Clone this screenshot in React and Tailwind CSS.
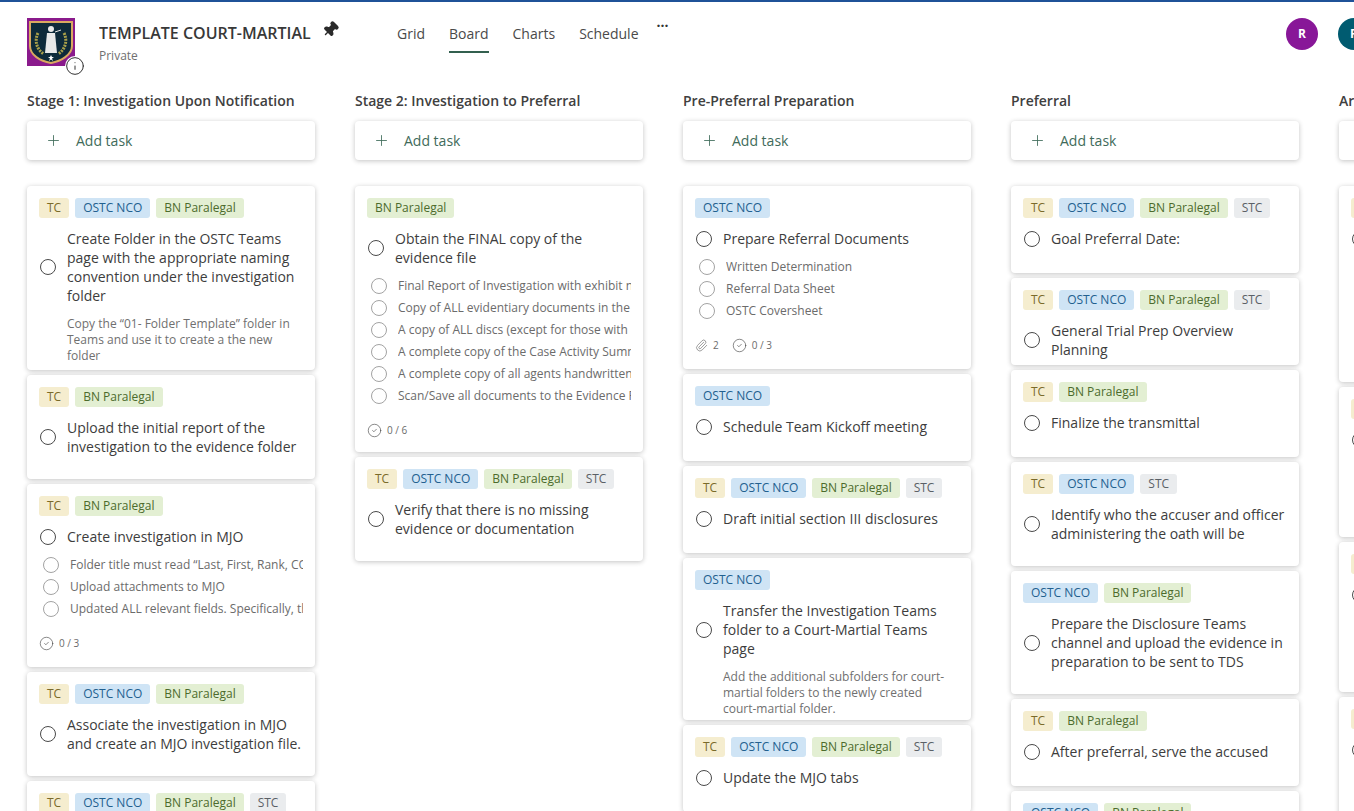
import { Plus, Pin, Info, Paperclip, CircleCheck } from "lucide-react";

const tagStyles = {
  TC: "bg-[#f5edcf] text-[#7a6a2a]",
  "OSTC NCO": "bg-[#cfe4f5] text-[#22608f]",
  "BN Paralegal": "bg-[#e3efd3] text-[#4c6b2c]",
  STC: "bg-[#eaecee] text-[#5a6066]",
};

const columns = [
  {
    title: "Stage 1: Investigation Upon Notification",
    cards: [
      {
        h: "h-[184px]",
        tags: ["TC", "OSTC NCO", "BN Paralegal"],
        title: "Create Folder in the OSTC Teams page with the appropriate naming convention under the investigation folder",
        note: "Copy the “01- Folder Template” folder in Teams and use it to create a the new folder",
      },
      {
        h: "h-[104px]",
        tags: ["TC", "BN Paralegal"],
        title: "Upload the initial report of the investigation to the evidence folder",
      },
      {
        h: "h-[183px]",
        tags: ["TC", "BN Paralegal"],
        title: "Create investigation in MJO",
        items: [
          "Folder title must read “Last, First, Rank, CO, Battalion, Investigation”",
          "Upload attachments to MJO",
          "Updated ALL relevant fields. Specifically, the offense and subject data",
        ],
        checks: "0 / 3",
      },
      {
        h: "h-[104px]",
        tags: ["TC", "OSTC NCO", "BN Paralegal"],
        title: "Associate the investigation in MJO and create an MJO investigation file.",
      },
      { h: "h-[104px]", tags: ["TC", "OSTC NCO", "BN Paralegal", "STC"], title: "" },
    ],
  },
  {
    title: "Stage 2: Investigation to Preferral",
    cards: [
      {
        h: "h-[266px]",
        tags: ["BN Paralegal"],
        title: "Obtain the FINAL copy of the evidence file",
        items: [
          "Final Report of Investigation with exhibit numbers",
          "Copy of ALL evidentiary documents in the file",
          "A copy of ALL discs (except for those with special handling)",
          "A complete copy of the Case Activity Summary",
          "A complete copy of all agents handwritten notes",
          "Scan/Save all documents to the Evidence Folder",
        ],
        checks: "0 / 6",
      },
      {
        h: "h-[104px]",
        tags: ["TC", "OSTC NCO", "BN Paralegal", "STC"],
        title: "Verify that there is no missing evidence or documentation",
      },
    ],
  },
  {
    title: "Pre-Preferral Preparation",
    cards: [
      {
        h: "h-[183px]",
        tags: ["OSTC NCO"],
        title: "Prepare Referral Documents",
        items: ["Written Determination", "Referral Data Sheet", "OSTC Coversheet"],
        clips: 2,
        checks: "0 / 3",
      },
      { h: "h-[87px]", tags: ["OSTC NCO"], title: "Schedule Team Kickoff meeting" },
      { h: "h-[87px]", tags: ["TC", "OSTC NCO", "BN Paralegal", "STC"], title: "Draft initial section III disclosures" },
      {
        h: "h-[162px]",
        tags: ["OSTC NCO"],
        title: "Transfer the Investigation Teams folder to a Court-Martial Teams page",
        note: "Add the additional subfolders for court-martial folders to the newly created court-martial folder.",
      },
      { h: "h-[87px]", tags: ["TC", "OSTC NCO", "BN Paralegal", "STC"], title: "Update the MJO tabs" },
    ],
  },
  {
    title: "Preferral",
    cards: [
      { h: "h-[87px]", tags: ["TC", "OSTC NCO", "BN Paralegal", "STC"], title: "Goal Preferral Date:" },
      { h: "h-[87px]", tags: ["TC", "OSTC NCO", "BN Paralegal", "STC"], title: "General Trial Prep Overview Planning" },
      { h: "h-[87px]", tags: ["TC", "BN Paralegal"], title: "Finalize the transmittal" },
      {
        h: "h-[104px]",
        tags: ["TC", "OSTC NCO", "STC"],
        title: "Identify who the accuser and officer administering the oath will be",
      },
      {
        h: "h-[123px]",
        tags: ["OSTC NCO", "BN Paralegal"],
        title: "Prepare the Disclosure Teams channel and upload the evidence in preparation to be sent to TDS",
      },
      { h: "h-[87px]", tags: ["TC", "BN Paralegal"], title: "After preferral, serve the accused" },
      { h: "h-[87px]", tags: ["OSTC NCO", "BN Paralegal"], title: "" },
    ],
  },
  {
    title: "Arraignment",
    cards: [
      { h: "h-[196px]", tags: ["TC"], title: "Task" },
      { h: "h-[150px]", tags: ["TC"], title: "Task" },
      { h: "h-[150px]", tags: ["TC"], title: "Task" },
      { h: "h-[150px]", tags: ["TC"], title: "Task" },
    ],
  },
];

function Tag({ name }) {
  return (
    <span className={`flex h-5 items-center rounded-[3px] px-2 text-xs leading-none ${tagStyles[name]}`}>{name}</span>
  );
}

function Radio({ small }) {
  return (
    <span
      className={`shrink-0 rounded-full border bg-white ${
        small ? "size-4 border-[#a3a3a3]" : "size-4 border-[#4a4a4a]"
      }`}
    />
  );
}

function Card({ card }) {
  return (
    <div className={`${card.h} shrink-0 overflow-hidden rounded bg-white px-3 pt-3 shadow-[0_1px_5px_rgba(0,0,0,0.24)]`}>
      <div className="flex gap-[6px]">
        {card.tags.map((t) => (
          <Tag key={t} name={t} />
        ))}
      </div>
      {card.title && (
        <div className="mt-[11px] flex items-center gap-[11px] pl-[1px]">
          <Radio />
          <div className="text-sm leading-[19px] text-[#3d3d3d]">{card.title}</div>
        </div>
      )}
      {card.note && (
        <div className="mt-[11px] pl-7 pr-2 text-xs leading-4 text-[#707070]">{card.note}</div>
      )}
      {card.items && (
        <div className="mt-[11px] flex flex-col gap-[6px] pl-1">
          {card.items.map((item) => (
            <div key={item} className="flex h-4 items-center gap-[11px]">
              <Radio small />
              <span className="w-[234px] overflow-hidden text-xs whitespace-nowrap text-[#6b6b6b]">{item}</span>
            </div>
          ))}
        </div>
      )}
      {card.checks && (
        <div className="mt-[19px] flex items-center text-[10px] text-[#6b6b6b]">
          {card.clips && (
            <span className="mr-[13px] flex items-center gap-[5px]">
              <Paperclip size={13} strokeWidth={1.2} />
              {card.clips}
            </span>
          )}
          <CircleCheck size={15} strokeWidth={1} className="mr-[5px] text-[#444]" />
          {card.checks}
        </div>
      )}
    </div>
  );
}

function Column({ col }) {
  return (
    <div className="flex w-[288px] shrink-0 flex-col">
      <h2 className="h-[41px] pt-[11px] text-sm leading-5 font-semibold whitespace-nowrap text-[#404040]">{col.title}</h2>
      <div className="flex h-[39px] shrink-0 items-center gap-[14px] rounded bg-white px-[18px] text-sm text-[#3f6b5a] shadow-[0_1px_5px_rgba(0,0,0,0.24)]">
        <Plus size={17} strokeWidth={1.2} />
        Add task
      </div>
      <div className="mt-[26px] flex flex-col gap-[5px]">
        {col.cards.map((card, i) => (
          <Card key={i} card={card} />
        ))}
      </div>
    </div>
  );
}

function Logo() {
  return (
    <div className="relative size-12 shrink-0 bg-[#8a1a8c]">
      <svg viewBox="0 0 48 48" className="size-12">
        <path d="M3 4h42v24c0 9-11 15-21 17C13 43 3 37 3 28z" fill="#0e2a3a" stroke="#d9a860" strokeWidth="2" />
        <path d="M11 15c-4 8-1 17 6 21M37 15c4 8 1 17-6 21" fill="none" stroke="#a9a04a" strokeWidth="3" strokeDasharray="2 1" />
        <circle cx="24" cy="11" r="3" fill="#e8e8e8" />
        <path d="M20 15h8l2 20h-12z" fill="#e8e8e8" />
        <path d="M28 14l6-2" stroke="#e8e8e8" />
        <path d="M24 37l1 2h2l-2 1.500 1 2.500-2-1.500-2 1.500 1-2.500-2-1.500h2z" fill="#fff" />
      </svg>
      <span className="absolute -right-[10px] -bottom-[10px] flex size-5 items-center justify-center rounded-full bg-white">
        <Info size={20} strokeWidth={1.2} className="text-[#333]" />
      </span>
    </div>
  );
}

export default function App() {
  return (
    <div className="h-[811px] w-[1354px] overflow-hidden bg-white font-['Open_Sans','Noto_Sans',sans-serif]">
      <div className="h-[2px] bg-[#1f5298]" />
      <header className="flex h-[78px] items-start pt-4 pl-[27px]">
        <Logo />
        <div className="ml-[24px] w-[225px] pt-[3px]">
          <div className="truncate text-base leading-6 font-semibold text-[#383838]">TEMPLATE COURT-MARTIAL</div>
          <div className="mt-[3px] text-xs leading-4 text-[#707070]">Private</div>
        </div>
        <Pin size={17} className="mt-[3px] ml-[-2px] rotate-45 fill-[#2b2b2b] text-[#2b2b2b]" />
        <nav className="ml-[58px] flex gap-6 pt-[4px] text-sm text-[#4a4a4a]">
          <span className="h-[31px] leading-6">Grid</span>
          <span className="h-[31px] border-b-2 border-[#33604f] leading-6">Board</span>
          <span className="h-[31px] leading-6">Charts</span>
          <span className="h-[31px] leading-6">Schedule</span>
        </nav>
        <span className="ml-[18px] text-sm leading-4 font-bold text-[#333]">···</span>
        <div className="ml-auto flex gap-1 pt-0">
          <span className="flex size-8 items-center justify-center rounded-full bg-[#881798] text-xs font-bold text-white">R</span>
          <span className="flex size-8 translate-x-[16px] items-center justify-start rounded-full bg-[#005b70] pl-3 text-xs font-bold text-white">F</span>
        </div>
      </header>
      <main className="flex gap-10 pl-[27px]">
        {columns.map((col) => (
          <Column key={col.title} col={col} />
        ))}
      </main>
    </div>
  );
}
